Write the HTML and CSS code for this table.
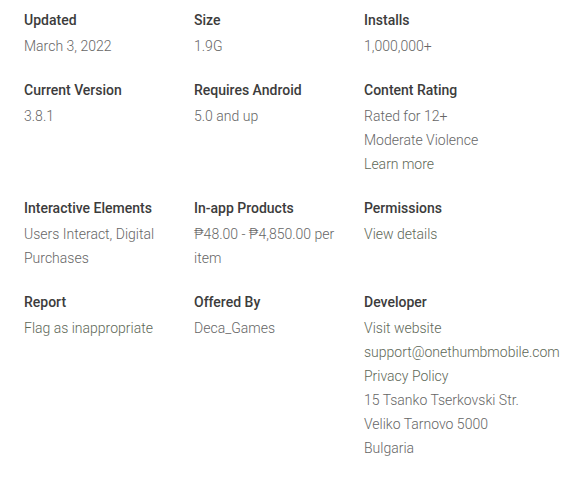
FILE: index.html
```html
<!DOCTYPE html>
<html>
<head>
<meta charset="utf-8">
<link rel="stylesheet" href="styles.css">
</head>
<body>
<div class="grid">
  <div class="item">
    <div class="label">Updated</div>
    <div class="value">March 3, 2022</div>
  </div>
  <div class="item">
    <div class="label">Size</div>
    <div class="value">1.9G</div>
  </div>
  <div class="item">
    <div class="label">Installs</div>
    <div class="value">1,000,000+</div>
  </div>
  <div class="item">
    <div class="label">Current Version</div>
    <div class="value">3.8.1</div>
  </div>
  <div class="item">
    <div class="label">Requires Android</div>
    <div class="value">5.0 and up</div>
  </div>
  <div class="item">
    <div class="label">Content Rating</div>
    <div class="value">Rated for 12+<br>Moderate Violence<br><a class="link">Learn more</a></div>
  </div>
  <div class="item">
    <div class="label">Interactive Elements</div>
    <div class="value">Users Interact, Digital Purchases</div>
  </div>
  <div class="item">
    <div class="label">In-app Products</div>
    <div class="value">₱48.00 - ₱4,850.00 per item</div>
  </div>
  <div class="item">
    <div class="label">Permissions</div>
    <div class="value"><a class="link">View details</a></div>
  </div>
  <div class="item">
    <div class="label">Report</div>
    <div class="value"><a class="link">Flag as inappropriate</a></div>
  </div>
  <div class="item">
    <div class="label">Offered By</div>
    <div class="value">Deca_Games</div>
  </div>
  <div class="item">
    <div class="label">Developer</div>
    <div class="value"><a class="link">Visit website</a><br><a class="link">support@onethumbmobile.com</a><br><a class="link">Privacy Policy</a><br>15 Tsanko Tserkovski Str.<br>Veliko Tarnovo 5000<br>Bulgaria</div>
  </div>
</div>
</body>
</html>
```
FILE: styles.css
```css
html, body {
  margin: 0;
  background: #fff;
}
body {
  padding: 8px 0 0 24px;
  font-family: Roboto, "Liberation Sans", sans-serif;
  font-size: 14px;
}
.grid {
  display: grid;
  grid-template-columns: 170px 170px 180px;
  row-gap: 20px;
}
.label {
  font-weight: 500;
  color: #3c3c3c;
  line-height: 24px;
}
.value {
  margin-top: 2px;
  font-weight: 300;
  color: #666;
  line-height: 24px;
  padding-right: 8px;
}
.link {
  color: #5e6857;
  text-decoration: none;
}
```
